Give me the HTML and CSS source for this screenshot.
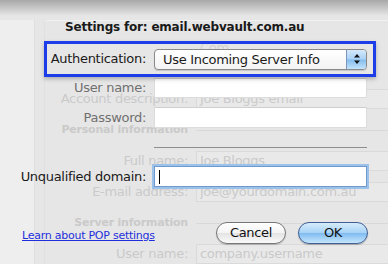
FILE: index.html
```html
<!DOCTYPE html>
<html lang="en">
<head>
    <meta charset="UTF-8">
    <title>Settings for email.webvault.com.au</title>
    <link rel="stylesheet" href="styles.css">
</head>
<body>
    <div class="window">
        <!-- the account window behind the sheet -->
        <div class="backdrop">
            <div class="sidebar"></div>
            <div class="pane">
                <div class="ghost-row ghost-tab">
                    <span></span>
                    <span class="ghost-value">Com</span>
                </div>
                <div class="ghost-row ghost-first">
                    <span class="ghost-label">Account description:</span>
                    <span class="ghost-field">Joe Bloggs email</span>
                </div>
                <div class="ghost-row ghost-head">
                    <span class="ghost-label">Personal information</span>
                    <span class="ghost-rule"></span>
                </div>
                <div class="ghost-row">
                    <span class="ghost-label">Full name:</span>
                    <span class="ghost-field">Joe Bloggs</span>
                </div>
                <div class="ghost-row ghost-tight">
                    <span class="ghost-label">E-mail address:</span>
                    <span class="ghost-field">joe@yourdomain.com.au</span>
                </div>
                <div class="ghost-row ghost-head">
                    <span class="ghost-label">Server information</span>
                    <span class="ghost-rule"></span>
                </div>
                <div class="ghost-row">
                    <span class="ghost-label">User name:</span>
                    <span class="ghost-field">company.username</span>
                </div>
            </div>
        </div>

        <!-- the sheet -->
        <div class="sheet">
            <div class="sheet-title">Settings for: email.webvault.com.au</div>

            <div class="auth-box">
                <span class="label">Authentication:</span>
                <div class="popup">
                    <span class="popup-text">Use Incoming Server Info</span>
                    <span class="popup-arrows">
                        <svg width="8" height="12" viewBox="0 0 8 12">
                            <path d="M4 1 L7 4.5 L1 4.5 Z" fill="#111"/>
                            <path d="M4 11 L7 7.5 L1 7.5 Z" fill="#111"/>
                        </svg>
                    </span>
                </div>
            </div>

            <div class="form-row row-user">
                <span class="label dim">User name:</span>
                <span class="field field-off"></span>
            </div>
            <div class="form-row row-pass">
                <span class="label dim">Password:</span>
                <span class="field field-off field-tall"></span>
            </div>
            <div class="form-row row-sep">
                <span></span>
                <span class="separator"></span>
            </div>
            <div class="form-row row-domain">
                <span class="label">Unqualified domain:</span>
                <span class="field field-focus"><span class="caret"></span></span>
            </div>

            <div class="sheet-footer">
                <a class="help-link" href="#">Learn about POP settings</a>
                <button class="btn btn-cancel">Cancel</button>
                <button class="btn btn-ok">OK</button>
            </div>
        </div>
    </div>
</body>
</html>
```

FILE: styles.css
```css
* {
    box-sizing: border-box;
}
body {
    margin: 0;
    background-color: #e6e6e6;
    font-family: "DejaVu Sans", "Liberation Sans", sans-serif;
    font-size: 13px;
    letter-spacing: -0.3px;
    line-height: 16px;
}
.window {
    position: relative;
    width: 388px;
    height: 264px;
    overflow: hidden;
    background-color: #e6e6e6;
}
.window::before {
    content: "";
    position: absolute;
    left: 0;
    right: 0;
    top: 0;
    height: 16px;
    background: linear-gradient(rgba(0,0,0,0.27), rgba(0,0,0,0));
    z-index: 3;
}

/* backdrop window */
.backdrop {
    display: flex;
    height: 100%;
    padding-top: 20px;
}
.sidebar {
    width: 35px;
    background-color: #eeeeee;
    border-right: 1px solid #dfdfdf;
}
.pane {
    flex: 1;
    margin-left: 9px;
    border-top: 1px solid #f1f1f1;
    border-left: 1px solid #e0e0e0;
    border-top-left-radius: 4px;
    color: #cacaca;
}
.ghost-row {
    display: grid;
    grid-template-columns: 143px 1fr;
    column-gap: 8px;
    align-items: center;
    height: 20px;
    margin-top: 12px;
}
.ghost-tab {
    margin-top: 17px;
}
.ghost-value {
    padding-left: 4px;
    color: #d2d2d2;
}
.ghost-first {
    margin-top: 31px;
}
.ghost-tight {
    margin-top: 11px;
}
.ghost-label {
    text-align: right;
    white-space: nowrap;
}
.ghost-field {
    height: 20px;
    padding-left: 3px;
    line-height: 18px;
    border: 1px solid #dadada;
    border-right: none;
    background-color: #e9e9e9;
    white-space: nowrap;
}
.ghost-head {
    height: 18px;
}
.ghost-head .ghost-label {
    font-size: 11px;
    font-weight: bold;
    letter-spacing: -0.2px;
}
.ghost-rule {
    height: 1px;
    background-color: #d8d8d8;
}

/* sheet */
.sheet {
    position: absolute;
    inset: 0;
    display: flex;
    flex-direction: column;
    color: #1a1a1a;
}
.sheet-title {
    margin: 20px 0 0 65px;
    font-size: 12px;
    font-weight: bold;
    line-height: 15px;
    letter-spacing: -0.2px;
}
.auth-box {
    display: grid;
    grid-template-columns: 99px 213px;
    column-gap: 8px;
    align-items: center;
    width: 332px;
    height: 36px;
    margin: 6px 0 0 44px;
    border: 3px solid #1c3de8;
    box-shadow: 0 2px 4px rgba(0,0,0,0.25);
    position: relative;
    z-index: 1;
}
.label {
    text-align: right;
    white-space: nowrap;
}
.label.dim {
    color: #707070;
}
.popup {
    display: flex;
    height: 21px;
    border: 1px solid #8a8a8a;
    border-radius: 4px;
    background: linear-gradient(#ffffff, #f3f3f3);
    box-shadow: 0 1px 1px rgba(0,0,0,0.15);
    overflow: hidden;
}
.popup-text {
    flex: 1;
    padding-left: 8px;
    line-height: 19px;
}
.popup-arrows {
    width: 20px;
    display: flex;
    align-items: center;
    justify-content: center;
    border-left: 1px solid #7d95bd;
    background: linear-gradient(#d4e9fb 0%, #a9d2f5 48%, #84bdee 52%, #c3e3fb 100%);
}
.form-row {
    display: grid;
    grid-template-columns: 146px 213px;
    column-gap: 8px;
    align-items: center;
}
.field {
    display: block;
    height: 20px;
    background-color: #ffffff;
}
.field-off {
    border: 1px solid #dcdcdc;
    border-top-color: #cfcfcf;
}
.row-user {
    margin-top: 1px;
}
.row-pass {
    margin-top: 9px;
}
.field-tall {
    height: 21px;
}
.row-sep {
    margin-top: 19px;
}
.separator {
    height: 1px;
    background-color: #8e8e8e;
}
.row-domain {
    margin-top: 18px;
}
.field-focus {
    height: 21px;
    border: 1px solid #6e9ad0;
    box-shadow: 0 0 0 2px #9cc2ea;
    padding: 3px 0 0 4px;
}
.caret {
    display: block;
    width: 1px;
    height: 14px;
    background-color: #000;
}
.sheet-footer {
    display: flex;
    align-items: flex-end;
    gap: 12px;
    margin-top: 35px;
    padding: 0 20px 0 22px;
    height: 22px;
}
.help-link {
    margin-right: auto;
    margin-bottom: 2px;
    font-size: 11px;
    line-height: 13px;
    letter-spacing: -0.25px;
    color: #1f2fdc;
}
.btn {
    width: 70px;
    height: 22px;
    border-radius: 11px;
    font-family: inherit;
    font-size: 13px;
    letter-spacing: -0.3px;
    color: #111;
    padding: 0;
    line-height: 20px;
}
.btn-cancel {
    border: 1px solid #777;
    background: linear-gradient(#ffffff 0%, #f4f4f4 48%, #e4e4e4 52%, #fafafa 100%);
    box-shadow: 0 1px 1px rgba(0,0,0,0.2);
}
.btn-ok {
    border: 1px solid #3f5f95;
    background: linear-gradient(#d6ecfc 0%, #a8d3f6 48%, #80bcf0 52%, #c6e6fc 100%);
    box-shadow: 0 1px 1px rgba(0,0,0,0.25);
}
```
